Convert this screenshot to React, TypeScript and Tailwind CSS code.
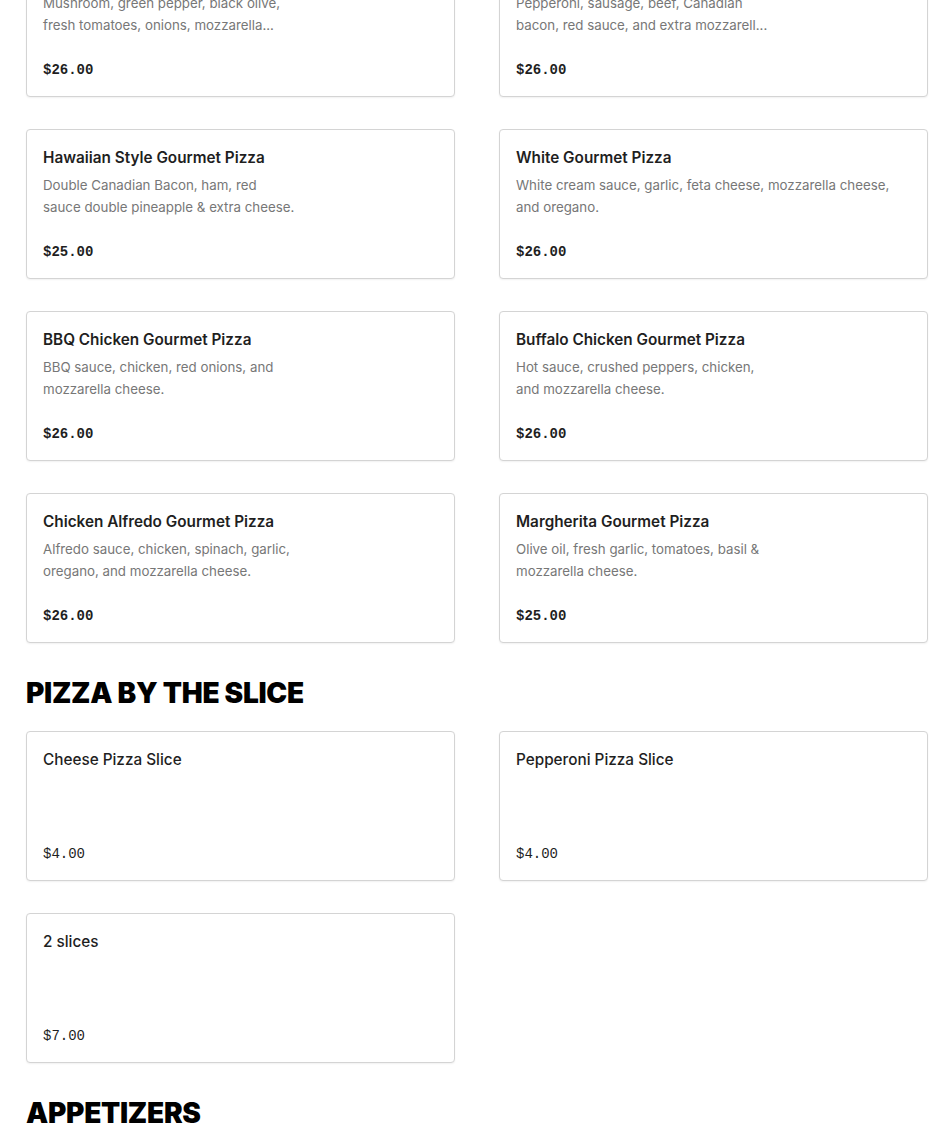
type Item = { name: string; lines?: string[]; price: string };

const gourmet: Item[] = [
    { name: "Vegetarian Gourmet Pizza", lines: ["Mushroom, green pepper, black olive,", "fresh tomatoes, onions, mozzarella..."], price: "$26.00" },
    { name: "Meat Lovers Gourmet Pizza", lines: ["Pepperoni, sausage, beef, Canadian", "bacon, red sauce, and extra mozzarell..."], price: "$26.00" },
    { name: "Hawaiian Style Gourmet Pizza", lines: ["Double Canadian Bacon, ham, red", "sauce double pineapple & extra cheese."], price: "$25.00" },
    { name: "White Gourmet Pizza", lines: ["White cream sauce, garlic, feta cheese, mozzarella cheese,", "and oregano."], price: "$26.00" },
    { name: "BBQ Chicken Gourmet Pizza", lines: ["BBQ sauce, chicken, red onions, and", "mozzarella cheese."], price: "$26.00" },
    { name: "Buffalo Chicken Gourmet Pizza", lines: ["Hot sauce, crushed peppers, chicken,", "and mozzarella cheese."], price: "$26.00" },
    { name: "Chicken Alfredo Gourmet Pizza", lines: ["Alfredo sauce, chicken, spinach, garlic,", "oregano, and mozzarella cheese."], price: "$26.00" },
    { name: "Margherita Gourmet Pizza", lines: ["Olive oil, fresh garlic, tomatoes, basil &", "mozzarella cheese."], price: "$25.00" },
];

const slices: Item[] = [
    { name: "Cheese Pizza Slice", price: "$4.00" },
    { name: "Pepperoni Pizza Slice", price: "$4.00" },
    { name: "2 slices", price: "$7.00" },
];

function MenuCard({ item, light }: { item: Item; light?: boolean }) {
    return (
        <div className="h-[150px] flex flex-col rounded-[4px] border border-[#d4d4d4] bg-white p-4 shadow-[0_1px_2px_rgba(0,0,0,0.06)]">
            <div className={`text-[15.3px] leading-6 text-[#1f1f1f] font-['Inter',sans-serif] ${light ? "font-medium" : "font-semibold"}`}>
                {item.name}
            </div>
            {item.lines && (
                <div className="mt-1 text-[13.3px] leading-[22px] text-[#777777] font-['Inter',sans-serif]">
                    {item.lines.map((l) => <div key={l}>{l}</div>)}
                </div>
            )}
            <div className={`mt-auto text-[14px] leading-5 text-[#1f1f1f] font-['Liberation_Mono',monospace] ${light ? "font-normal" : "font-bold"}`}>
                {item.price}
            </div>
        </div>
    );
}

function Heading({ children }: { children: string }) {
    return (
        <h2 className="mt-8 mb-5 text-[28px] leading-9 font-black tracking-[-0.01em] text-black font-['Inter',sans-serif]">
            {children}
        </h2>
    );
}

export default function App() {
    return (
        <div className="min-h-screen bg-white overflow-hidden">
            <div className="ml-[26px] w-[902px] -mt-[53px]">
                <div className="grid grid-cols-2 gap-x-[44px] gap-y-8">
                    {gourmet.map((it) => <MenuCard key={it.name} item={it} />)}
                </div>

                <Heading>PIZZA BY THE SLICE</Heading>
                <div className="grid grid-cols-2 gap-x-[44px] gap-y-8">
                    {slices.map((it) => <MenuCard key={it.name} item={it} light />)}
                </div>

                <Heading>APPETIZERS</Heading>
            </div>
        </div>
    );
}
